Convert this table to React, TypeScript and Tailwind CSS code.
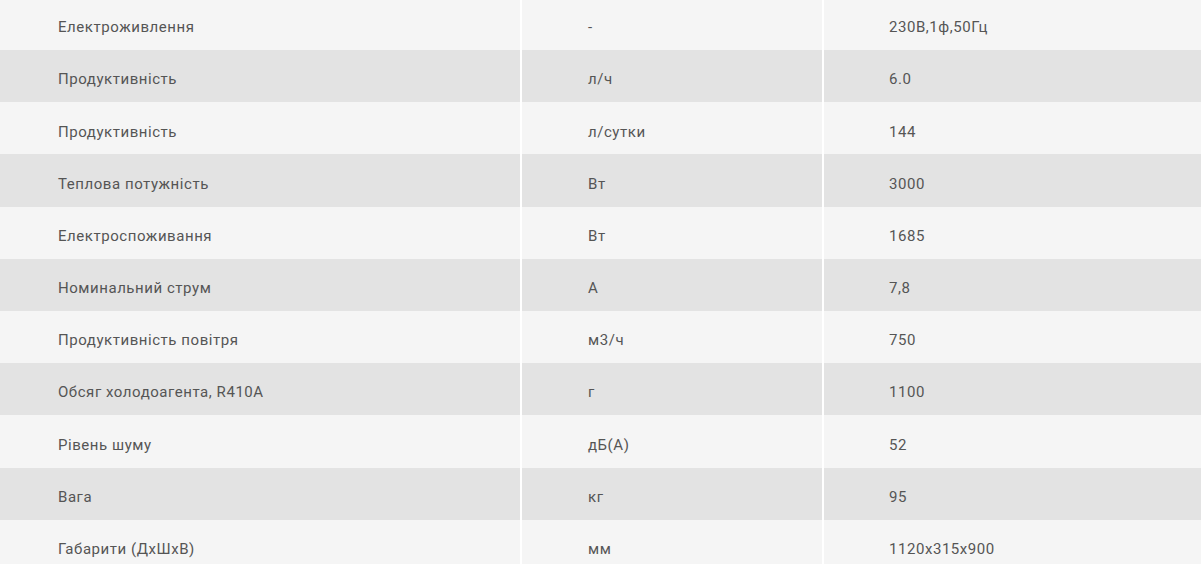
import React from 'react';

interface SpecRow {
  name: string;
  unit: string;
  value: string;
}

const rows: SpecRow[] = [
  { name: 'Електроживлення', unit: '-', value: '230В,1ф,50Гц' },
  { name: 'Продуктивність', unit: 'л/ч', value: '6.0' },
  { name: 'Продуктивність', unit: 'л/сутки', value: '144' },
  { name: 'Теплова потужність', unit: 'Вт', value: '3000' },
  { name: 'Електроспоживання', unit: 'Вт', value: '1685' },
  { name: 'Номинальний струм', unit: 'А', value: '7,8' },
  { name: 'Продуктивність повітря', unit: 'м3/ч', value: '750' },
  { name: 'Обсяг холодоагента, R410A', unit: 'г', value: '1100' },
  { name: 'Рівень шуму', unit: 'дБ(А)', value: '52' },
  { name: 'Вага', unit: 'кг', value: '95' },
  { name: 'Габарити (ДхШхВ)', unit: 'мм', value: '1120x315x900' },
];

export default function App() {
  return (
    <div className="h-[564px] w-full overflow-hidden bg-[#f5f5f5]">
      <div className="-mt-[2.2px] font-['Roboto',_sans-serif] text-[15px] tracking-[0.55px] text-[#555]">
        {rows.map((row, i) => (
          <div
            key={i}
            className={`grid h-[52.2px] grid-cols-[522px_302px_1fr] ${
              i % 2 === 1 ? 'bg-[#e3e3e3]' : 'bg-[#f5f5f5]'
            }`}
          >
            <div className="flex items-center border-r-2 border-white pl-[58px] pt-[7px]">{row.name}</div>
            <div className="flex items-center border-r-2 border-white pl-[66px] pt-[7px]">{row.unit}</div>
            <div className="flex items-center pl-[65px] pt-[7px]">{row.value}</div>
          </div>
        ))}
      </div>
    </div>
  );
}
